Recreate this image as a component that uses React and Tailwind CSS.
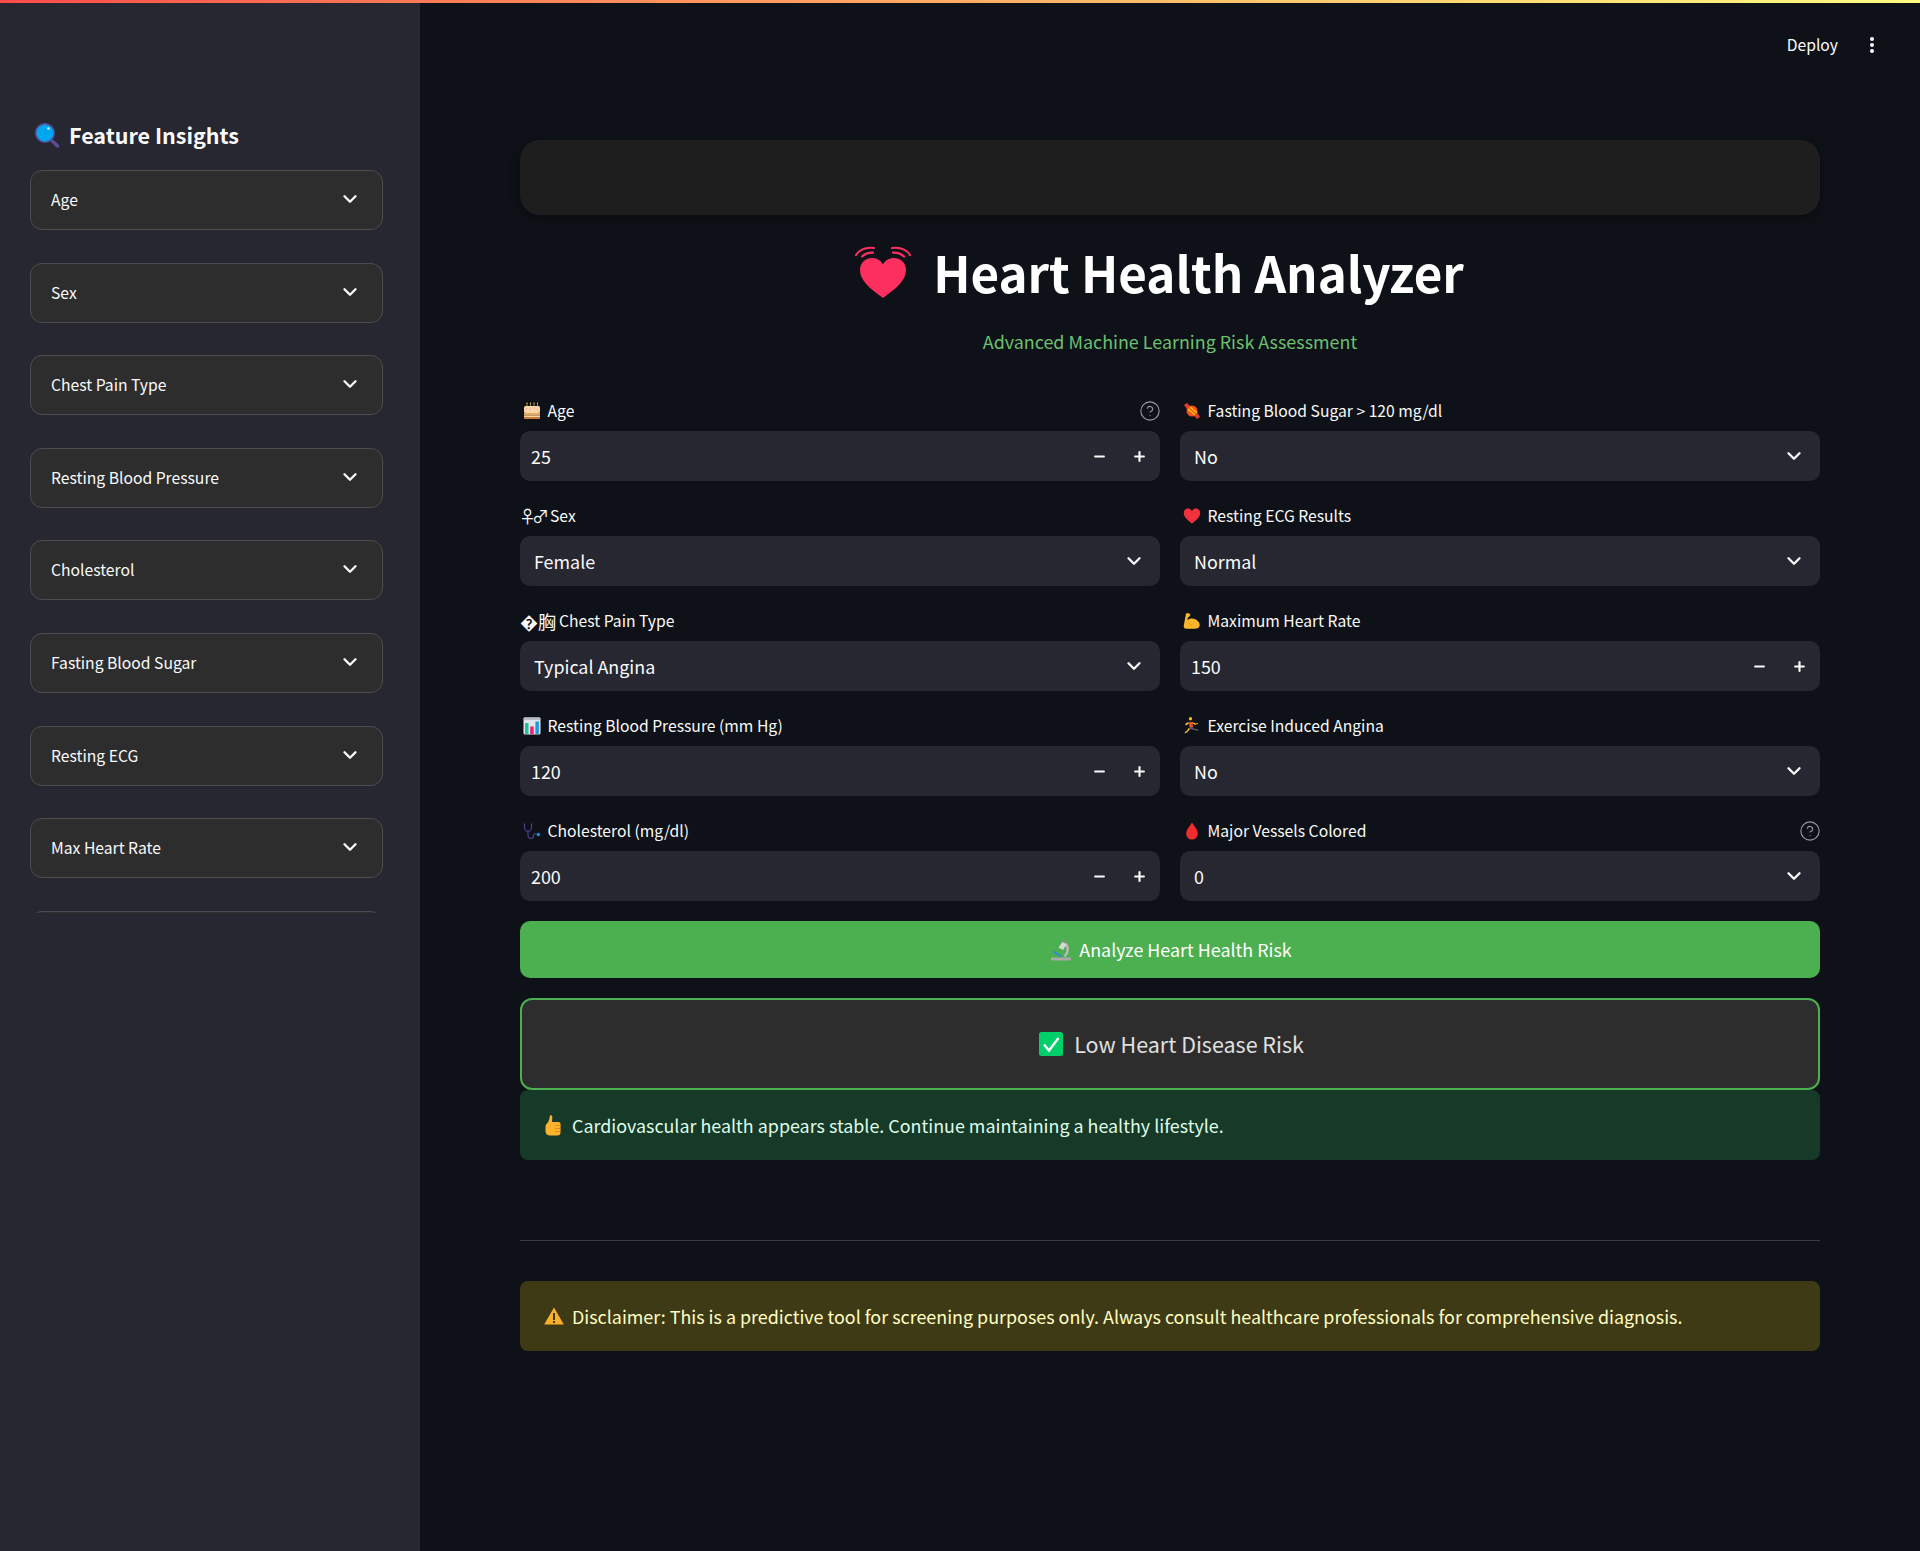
import React from 'react';
import { ChevronDown, CircleHelp, Minus, Plus } from 'lucide-react';

// emoji drawings, no color emoji font in the sandbox
const Cake = () => (
  <svg viewBox="0 0 18 18" className="w-[18px] h-[18px]">
    <path d="M4 1v3M7.500 1v3M11 1v3M14.500 1v3" stroke="#8a8f4a" strokeWidth="1" />
    <path d="M4 0.500v1.200M7.500 0.500v1.200M11 0.500v1.200M14.500 0.500v1.200" stroke="#f5b041" strokeWidth="1" />
    <rect x="1" y="4" width="16" height="7" rx="1.500" fill="#fbd7a5" />
    <path d="M3 6.500h1M7 7.500h1M11 6h1M14 8h1" stroke="#f48fb1" strokeWidth="1" />
    <rect x="1" y="11" width="16" height="2.500" fill="#e8a85f" />
    <rect x="1" y="13.500" width="16" height="1.500" fill="#fbd7a5" />
    <rect x="1" y="15" width="16" height="2" rx="0.500" fill="#c97a35" />
  </svg>
);

const Candy = () => (
  <svg viewBox="0 0 18 18" className="w-[18px] h-[18px]">
    <path d="M1 3l3-2 3 3-3 3z" fill="#e53935" />
    <path d="M17 15l-3 2-2.500-3 3-3z" fill="#e53935" />
    <circle cx="9" cy="9" r="5.500" fill="#f4511e" />
    <path d="M5 7l7 6M7 5l7 6" stroke="#ffc107" strokeWidth="1.600" />
  </svg>
);

const RedHeart = () => (
  <svg viewBox="0 0 18 18" className="w-[18px] h-[18px]">
    <path d="M9 16.500C4 12.500.8 9.600.8 5.900.8 3.300 2.800 1.600 5 1.600c1.700 0 3.100.9 4 2.400.9-1.500 2.300-2.400 4-2.400 2.200 0 4.200 1.700 4.200 4.300 0 3.700-3.200 6.600-8.200 10.600z" fill="#f0323c" />
  </svg>
);

const Muscle = () => (
  <svg viewBox="0 0 18 18" className="w-[18px] h-[18px]">
    <path d="M3 1.500c2-.9 4 0 4.500 1.200L6 5l-1 .2-.7 2.800c1.800-1.700 5.500-2.200 8-.8 2.600 1.300 4.800 3.700 4.400 6.300-.3 2.200-2.400 3.200-5 3.200H3.500C1.500 16.700.5 15.700.8 13.500z" fill="#fbb72c" />
    <path d="M6 11l2 2.500M8 13.500l2-2" stroke="#e2941a" strokeWidth="0.800" fill="none" />
  </svg>
);

const Runner = () => (
  <svg viewBox="0 0 18 18" className="w-[18px] h-[18px]">
    <circle cx="7.500" cy="1.800" r="1.700" fill="#fbb72c" />
    <path d="M2 7l3-2 1 1.500-3 2z" fill="#fbb72c" />
    <path d="M9 5l4 1.500 2-.5v1l-3 .8-2.500-1z" fill="#fbb72c" />
    <path d="M6 5h3.500l.5 5H6.500z" fill="#f4511e" />
    <path d="M6.500 10h3.500l-.5 2-3 .5z" fill="#5d5470" />
    <path d="M7 12l-2.500 3L2 16.500l-.5-1L4 13.500 5.500 11z" fill="#fbb72c" />
    <path d="M9.500 11l5.500 1.500 .5 1.500-6.500-1.500z" fill="#5d5470" />
  </svg>
);

const Drop = () => (
  <svg viewBox="0 0 18 18" className="w-[18px] h-[18px]">
    <path d="M9 .5C11 4.200 14.800 7.500 14.800 11.400 14.800 15 12.200 17.500 9 17.500S3.200 15 3.200 11.400C3.200 7.500 7 4.200 9 .5z" fill="#f02c2c" />
  </svg>
);

const BarChart = () => (
  <svg viewBox="0 0 18 18" className="w-[18px] h-[18px]">
    <rect x="0.500" y="0.500" width="17" height="17" rx="1.500" fill="#e3e6ea" />
    <rect x="0.500" y="0.500" width="17" height="2.500" rx="1" fill="#b8bec6" />
    <rect x="2" y="6" width="3.500" height="11" fill="#17c79a" />
    <rect x="7.200" y="9.500" width="3.500" height="7.500" fill="#f01e7a" />
    <rect x="12.400" y="4.500" width="3.500" height="12.500" fill="#1e9be0" />
  </svg>
);

const Stethoscope = () => (
  <svg viewBox="0 0 18 18" className="w-[18px] h-[18px]" fill="none">
    <path d="M1.500 1.500v4c0 2.500 2 4 3.500 4s3.500-1.500 3.500-4v-4" stroke="#4b3f8f" strokeWidth="1.200" />
    <path d="M5 9.500v3.500c0 2 1.300 3.500 3 3.500s2.600-1.500 2.600-3c0-1.300 1-2 2.400-1.300" stroke="#4b3f8f" strokeWidth="1.200" />
    <circle cx="15.300" cy="12.500" r="1.800" fill="#1e88e5" />
  </svg>
);

const Magnifier = () => (
  <svg viewBox="0 0 25 25" className="w-[25px] h-[25px]">
    <path d="M15 16l7.500 7" stroke="#5c4a94" strokeWidth="3.600" strokeLinecap="round" />
    <circle cx="10" cy="10" r="9.300" fill="#00a7f0" stroke="#5c4a94" strokeWidth="1.500" />
    <circle cx="13.500" cy="5.500" r="1.300" fill="#d6f2ff" />
  </svg>
);

const Microscope = () => (
  <svg viewBox="0 0 22 22" className="w-[22px] h-[22px]" fill="none">
    <rect x="1" y="18.500" width="20" height="3" rx="0.800" fill="#a9a9a9" />
    <path d="M13.500 3.500c4.500 2 6 8.500 1 14" stroke="#b8b8b8" strokeWidth="2.600" />
    <path d="M8.500 8.500l4-5.500 4 2.500-3.500 5.500z" fill="#d8d8d8" />
    <path d="M12.500 2.500l1.500-1.500 2.500 1.800-.8 2z" fill="#8a8a8a" />
    <path d="M3.500 12.500l8 5" stroke="#2f86e0" strokeWidth="1.800" />
  </svg>
);

const ThumbsUp = () => (
  <svg viewBox="0 0 18 22" className="w-[18px] h-[22px]">
    <path d="M6 1.500c1.500-.8 2.400.3 2.300 1.800L8 8h6.500c1.500 0 2 1 2 2v8.500c0 1.800-1 3-3 3H6c-2.500 0-4.500-1.500-4.500-4.500v-4.500c0-1.500.8-2.500 2-3.500C5 7 5.500 4 6 1.500z" fill="#fdb22c" />
    <path d="M11 11.500h5.500M11 14.500h5.500M11 17.500h5" stroke="#d98a14" strokeWidth="0.900" />
  </svg>
);

const Warn = () => (
  <svg viewBox="0 0 20 18" className="w-5 h-[18px]">
    <path d="M10 .5L19.800 17.500H.2z" fill="#fbb02c" />
    <rect x="9" y="6" width="2" height="7" fill="#3f3a16" />
    <rect x="9" y="14" width="2" height="2" fill="#3f3a16" />
  </svg>
);

const CheckMark = () => (
  <svg viewBox="0 0 24 24" className="w-6 h-6">
    <rect width="24" height="24" rx="2.500" fill="#00cf6a" />
    <path d="M5 12.500l5 6L19.500 6" fill="none" stroke="#fff" strokeWidth="2.400" />
  </svg>
);

const BigHeart = () => (
  <svg viewBox="0 0 58 58" className="w-[58px] h-[58px] shrink-0" fill="none">
    <path d="M29 54C15 44 6 36 6 26 6 19 11 14 18 14c5 0 8.800 2.300 11 6.500 2.200-4.200 6-6.500 11-6.500 7 0 12 5 12 12 0 10-9 18-23 28z" fill="#fd2f5f" />
    <path d="M2 11C6 5 12 3 20 4M8 12.500c3-2.800 6.500-4 11-3.800" stroke="#fd2f5f" strokeWidth="2.200" strokeLinecap="round" />
    <path d="M56 11C52 5 46 3 38 4M50 12.500c-3-2.800-6.500-4-11-3.800" stroke="#fd2f5f" strokeWidth="2.200" strokeLinecap="round" />
  </svg>
);

const sidebarItems = [
  'Age',
  'Sex',
  'Chest Pain Type',
  'Resting Blood Pressure',
  'Cholesterol',
  'Fasting Blood Sugar',
  'Resting ECG',
  'Max Heart Rate',
];

function Expander({ title }) {
  return (
    <div className="h-[60px] shrink-0 flex items-center justify-between pl-5 pr-[21px] bg-[#2d2d2d] border border-[#4d4d4f] rounded-xl">
      <span className="text-[15.7px] leading-6 text-[#fafafa]">{title}</span>
      <ChevronDown size={22} strokeWidth={2.6} className="text-[#fafafa] -translate-y-px" />
    </div>
  );
}

function Label({ icon, glyph, glyphClass, text, help }) {
  return (
    <div className="h-6 mb-2 flex items-center text-[15.7px] text-[#fafafa] leading-6">
      {icon && <span className="w-[18px] h-[18px] ml-[3px] mr-[6.5px] flex">{icon}</span>}
      {glyph && <span className={glyphClass}>{glyph}</span>}
      <span>{text}</span>
      {help && <CircleHelp size={22} strokeWidth={1.2} className="ml-auto -mr-px text-[#9a9ba1]" />}
    </div>
  );
}

function NumberField({ value }) {
  return (
    <div className="h-[50px] flex items-center bg-[#262730] rounded-[10px] pl-[11px] pr-[13.5px] text-[17.9px] text-[#fafafa]">
      <span className="flex-1">{value}</span>
      <Minus size={15} strokeWidth={3.4} className="mr-[25px]" />
      <Plus size={15} strokeWidth={3.4} />
    </div>
  );
}

function SelectField({ value }) {
  return (
    <div className="h-[50px] flex items-center justify-between bg-[#262730] rounded-[10px] pl-[14px] pr-[15px] text-[17.9px] text-[#fafafa]">
      <span>{value}</span>
      <ChevronDown size={22} strokeWidth={2.6} />
    </div>
  );
}

export default function App() {
  return (
    <div className="min-h-[1551px] flex flex-col bg-[#0e1117] font-['Noto_Sans_CJK_SC','Liberation_Sans',sans-serif]">
      <div className="h-[3px] bg-gradient-to-r from-[#ff4b4b] to-[#fffd80]" />
      <div className="flex flex-1">
        {/* Sidebar */}
        <aside className="w-[420px] shrink-0 bg-[#262730] pl-[30px] pr-[37px] pt-[114px] flex flex-col">
          <div className="h-[36px] mb-[17px] pl-[5px] flex items-center gap-[9px]">
            <Magnifier />
            <h2 className="text-[21.5px] leading-9 font-semibold text-[#fafafa]">Feature Insights</h2>
          </div>
          <div className="flex flex-col gap-[32.6px]">
            {sidebarItems.map(item => (
              <Expander key={item} title={item} />
            ))}
            <div className="h-[2px] overflow-hidden shrink-0">
              <Expander title="" />
            </div>
          </div>
        </aside>

        {/* Contenido principal */}
        <main className="flex-1 px-[100px]">
          <div className="h-[84px] flex items-center justify-end -mr-[100px] pr-[46px] text-[15.7px] text-[#fafafa]">
            <span className="mr-[32px]">Deploy</span>
            <span className="flex flex-col gap-[2.300px] w-[4px]">
              <span className="w-[4px] h-[4px] rounded-full bg-[#fafafa]" />
              <span className="w-[4px] h-[4px] rounded-full bg-[#fafafa]" />
              <span className="w-[4px] h-[4px] rounded-full bg-[#fafafa]" />
            </span>
          </div>

          <div className="mt-[53px] h-[75px] bg-[#1e1e1e] rounded-[20px] shadow-[0_4px_12px_rgba(0,0,0,0.3)]" />

          <div className="mt-[25px] h-[66px] flex items-center justify-center gap-[21px] pr-[22px]">
            <BigHeart />
            <h1 className="mb-0.5 text-[49.3px] leading-[66px] font-bold text-white">Heart Health Analyzer</h1>
          </div>

          <p className="mt-5 h-[30px] leading-[30px] text-center text-[17.9px] text-[#6cc070]">
            Advanced Machine Learning Risk Assessment
          </p>

          <div className="mt-[43px] grid grid-cols-2 gap-x-5 gap-y-[23px]">
            <div>
              <Label icon={<Cake />} text="Age" help />
              <NumberField value="25" />
            </div>
            <div>
              <Label icon={<Candy />} text="Fasting Blood Sugar > 120 mg/dl" />
              <SelectField value="No" />
            </div>
            <div>
              <Label glyph="♀♂" glyphClass="-ml-px mr-[5px] text-[17px] tracking-[-4px]" text="Sex" />
              <SelectField value="Female" />
            </div>
            <div>
              <Label icon={<RedHeart />} text="Resting ECG Results" />
              <SelectField value="Normal" />
            </div>
            <div>
              <Label glyph="�胸" glyphClass="mr-[3px] text-lg" text="Chest Pain Type" />
              <SelectField value="Typical Angina" />
            </div>
            <div>
              <Label icon={<Muscle />} text="Maximum Heart Rate" />
              <NumberField value="150" />
            </div>
            <div>
              <Label icon={<BarChart />} text="Resting Blood Pressure (mm Hg)" />
              <NumberField value="120" />
            </div>
            <div>
              <Label icon={<Runner />} text="Exercise Induced Angina" />
              <SelectField value="No" />
            </div>
            <div>
              <Label icon={<Stethoscope />} text="Cholesterol (mg/dl)" />
              <NumberField value="200" />
            </div>
            <div>
              <Label icon={<Drop />} text="Major Vessels Colored" help />
              <SelectField value="0" />
            </div>
          </div>

          <button className="mt-5 w-full h-[57px] pl-[2px] flex items-center justify-center gap-[7px] bg-[#4caf50] rounded-[10px] text-[17.9px] text-white" type="button">
            <Microscope />
            <span>Analyze Heart Health Risk</span>
          </button>

          <div className="mt-5 h-[92px] pl-[3px] flex items-center justify-center gap-[11px] bg-[#2d2d2d] border-2 border-[#4caf50] rounded-xl text-[21.5px] text-[#e0e0e0]">
            <CheckMark />
            <span>Low Heart Disease Risk</span>
          </div>

          <div className="h-[70px] flex items-center gap-[10px] pl-6 bg-[#173928] rounded-lg text-[17.9px] text-[#dffde9]">
            <ThumbsUp />
            <span>Cardiovascular health appears stable. Continue maintaining a healthy lifestyle.</span>
          </div>

          <div className="mt-20 h-px bg-[#3a3b42]" />

          <div className="mt-10 h-[70px] flex items-center gap-[8px] pl-6 bg-[#3f3a16] rounded-lg text-[17.9px] text-[#ffffc2]">
            <Warn />
            <span>Disclaimer: This is a predictive tool for screening purposes only. Always consult healthcare professionals for comprehensive diagnosis.</span>
          </div>
        </main>
      </div>
    </div>
  );
}
